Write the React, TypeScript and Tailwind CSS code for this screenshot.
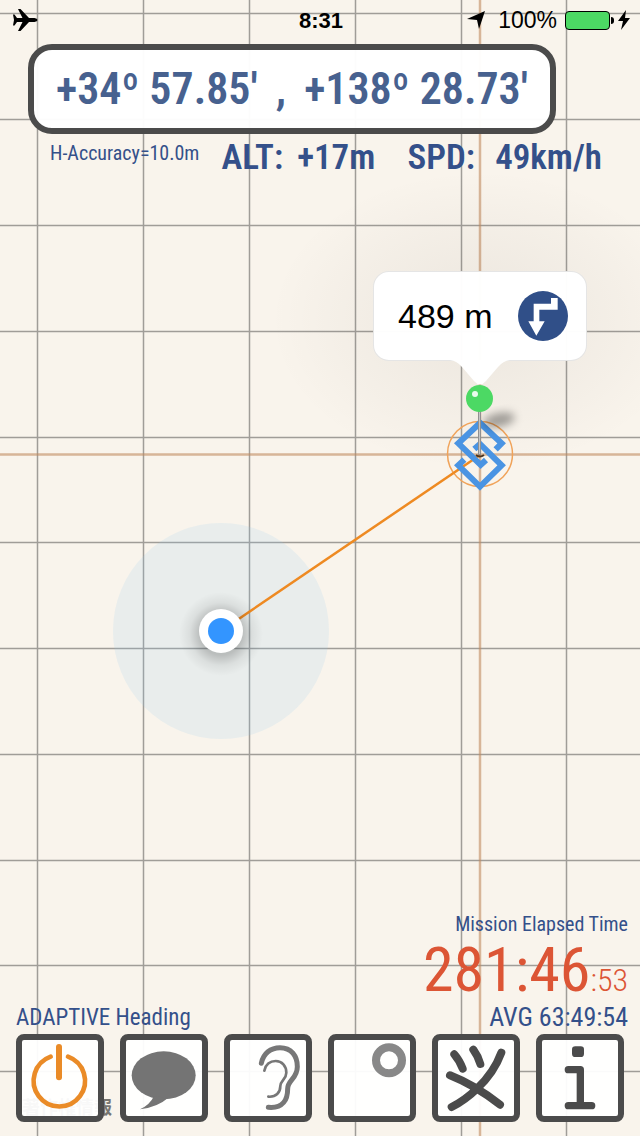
import { ReactNode } from 'react';

const columns = [37, 143, 249, 355, 461, 566];
const rows = [13, 119, 225, 331, 437, 542, 648, 754, 860, 965, 1071];

const MapCanvas = () => (
  <svg className="absolute inset-0 h-full w-full" viewBox="0 0 640 1136" preserveAspectRatio="xMidYMid slice" aria-hidden="true">
    <defs>
      <radialGradient id="calloutShade">
        <stop offset="0.2" stopColor="#201008" stopOpacity="0.05" />
        <stop offset="0.7" stopColor="#201008" stopOpacity="0.02" />
        <stop offset="1" stopColor="#201008" stopOpacity="0" />
      </radialGradient>
      <radialGradient id="dotShade">
        <stop offset="0.5" stopColor="#000" stopOpacity="0.2" />
        <stop offset="0.75" stopColor="#000" stopOpacity="0.06" />
        <stop offset="1" stopColor="#000" stopOpacity="0" />
      </radialGradient>
      <filter id="soft" x="-50%" y="-50%" width="200%" height="200%">
        <feGaussianBlur stdDeviation="4" />
      </filter>
    </defs>

    <g stroke="#a09d98" strokeWidth="1.5">
      {columns.map((x) => (
        <line key={x} x1={x + 0.5} y1="0" x2={x + 0.5} y2="1136" />
      ))}
      {rows.map((y) => (
        <line key={y} x1="0" y1={y + 0.5} x2="640" y2={y + 0.5} />
      ))}
    </g>
    <path d="M480 0V1136M0 454.500H640" stroke="#c08a60" strokeOpacity="0.6" strokeWidth="2.500" />

    <circle cx="221" cy="631" r="108" fill="#8cc8f0" fillOpacity="0.15" />
    <ellipse cx="480" cy="320" rx="210" ry="150" fill="url(#calloutShade)" />

    <circle cx="480" cy="454" r="32.500" fill="none" stroke="#f0a35a" strokeWidth="1.5" />
    <line x1="221" y1="631" x2="480" y2="455" stroke="#ee8a22" strokeWidth="2.500" />

    <circle cx="221" cy="634" r="42" fill="url(#dotShade)" />
    <circle cx="221" cy="631" r="22" fill="#fff" />
    <circle cx="221" cy="631" r="13" fill="#3395ff" />

    {/* target marker */}
    <g transform="translate(360 260) scale(0.3333)" fill="none" stroke="#4a94e3" strokeWidth="18">
      <path d="M407 568L425 550L360 489L295 550L362 615L378 600" />
      <path d="M343 567L360 552L425 616L360 680L295 616L313 599" />
    </g>

    {/* pin */}
    <ellipse cx="499" cy="420" rx="16" ry="7" fill="#000" fillOpacity="0.35" transform="rotate(-12 499 420)" filter="url(#soft)" />
    <path d="M476 455q4 3 8 0" fill="none" stroke="#4a3420" strokeWidth="2" />
    <line x1="479.500" y1="408" x2="479.500" y2="455" stroke="#909090" strokeWidth="3" />
    <line x1="479.500" y1="410" x2="479.500" y2="454" stroke="#c6c6c6" strokeWidth="1" />
    <circle cx="479.500" cy="398.500" r="13.500" fill="#4cd964" />
    <circle cx="475" cy="394" r="3" fill="#e9fbec" />
  </svg>
);

const StatusBar = () => (
  <header className="grid h-10 grid-cols-3 items-center pl-3 pr-2.5 font-['Liberation_Sans',Arial,sans-serif] text-black">
    <svg className="h-6 w-[26px]" viewBox="0 0 26 24" aria-label="Airplane mode">
      <path d="M1 6.500H2.500L5 10H10.500L6 1H8.500L17 10H22.500Q25.500 10.500 25.500 12Q25.500 13.500 22.500 14H17L8.500 23H6L10.500 14H5L2.500 17.500H1L2 12Z" />
    </svg>
    <p className="text-center text-[22px] font-bold">8:31</p>
    <div className="flex items-center justify-end gap-2">
      <svg className="mr-1 h-5 w-5" viewBox="0 0 20 20" aria-label="Location">
        <path d="M19 1L13 19L11 10L1 9Z" />
      </svg>
      <p className="text-[23px]">100%</p>
      <div className="flex items-center gap-px">
        <div className="h-[19px] w-[45px] rounded border border-black bg-[#4cd964]" />
        <div className="h-[7px] w-[3px] rounded-r-full bg-black" />
      </div>
      <svg className="-ml-1 h-5 w-3" viewBox="0 0 12 20" aria-label="Charging">
        <path d="M8 0L0 11H5L3 20L12 8H7Z" />
      </svg>
    </div>
  </header>
);

const Callout = () => (
  <div className="absolute left-3/4 top-[271px] w-[214px] -translate-x-1/2">
    <div className="flex h-[90px] items-center justify-between rounded-2xl border border-black/10 bg-white/98 pl-6 pr-[18px]">
      <p className="font-['Liberation_Sans',Arial,sans-serif] text-[34px] text-black">489 m</p>
      <button type="button" aria-label="Navigate" className="h-[50px] w-[50px] rounded-full bg-[#304f88]">
        <svg viewBox="0 0 150 150" fill="#fff">
          <path d="M99 21H119V56H64V91H80L55 134L31 91H47V38H99Z" />
        </svg>
      </button>
    </div>
    <svg className="mx-auto -mt-px h-[25px] w-[60px]" viewBox="0 0 60 25" fill="#fff" aria-hidden="true">
      <path d="M0 0Q7 1 12 7L24 21Q30 28 36 21L48 7Q53 1 60 0Z" />
    </svg>
  </div>
);

interface ToolButtonProps {
  label: string;
  children: ReactNode;
}

const ToolButton = ({ label, children }: ToolButtonProps) => (
  <button type="button" aria-label={label} className="aspect-square rounded-lg border-6 border-[#4b4b4b] bg-white/95">
    <svg className="h-full w-full" viewBox="0 0 228 228" fill="none" strokeLinecap="round">
      {children}
    </svg>
  </button>
);

const Toolbar = () => (
  <nav className="grid grid-cols-6 gap-4 px-4">
    <ToolButton label="Power">
      <g stroke="#ea8b27">
        <path d="M138 50A77 77 0 1 1 86 50" strokeWidth="14" />
        <path d="M111 21V112" strokeWidth="18" />
      </g>
    </ToolButton>
    <ToolButton label="Message">
      <g fill="#747474">
        <ellipse cx="113" cy="106" rx="96" ry="72" />
        <path d="M84 168Q72 194 42 208Q94 202 126 174Z" />
      </g>
    </ToolButton>
    <ToolButton label="Listen">
      <g stroke="#777">
        <path d="M94 70C100 40 122 23 150 23C184 23 202 48 202 80C202 116 173 120 173 146C173 178 160 206 115 202" strokeWidth="15" />
        <path d="M103 92C106 74 120 63 137 63C156 63 169 78 169 98C169 118 151 122 151 138C151 158 138 172 115 170" strokeWidth="8" />
      </g>
    </ToolButton>
    <ToolButton label="Record">
      <circle cx="165" cy="61" r="39" stroke="#888" strokeWidth="24" />
    </ToolButton>
    <ToolButton label="Tools">
      <g stroke="#4b4b4b" strokeWidth="24">
        <path d="M49 43Q64 60 74 86M106 29Q120 48 127 72" />
        <path d="M190 38Q168 98 118 145Q82 180 41 201M36 106Q112 136 186 194" />
      </g>
    </ToolButton>
    <ToolButton label="Information">
      <rect x="90" y="19" width="36" height="32" rx="10" fill="#4b4b4b" />
      <path d="M79 89H115V197M79 197H149" stroke="#4b4b4b" strokeWidth="22" strokeLinejoin="round" />
    </ToolButton>
  </nav>
);

const App = () => {
  return (
    <div className="relative flex min-h-screen flex-col justify-between overflow-hidden bg-[#f9f4ec] pb-3.5 font-['Roboto_Condensed','Liberation_Sans_Narrow',Roboto,sans-serif] text-[#34508a]">
      <MapCanvas />
      <a href="#legal" className="absolute bottom-4 left-[22px] font-['Noto_Sans_CJK_JP',sans-serif] text-lg font-bold text-[#777571]">
        著作権情報
      </a>
      <Callout />

      <div className="relative">
        <StatusBar />
        <div className="ml-7 mr-[84px] mt-1 flex h-[90px] items-center justify-between rounded-3xl border-6 border-[#4b4b4b] bg-white/97 px-[22px] text-[44px] font-semibold text-[#47618f]">
          <span>+34º 57.85'</span>
          <span>,</span>
          <span>+138º 28.73'</span>
        </div>
        <div className="ml-[50px] mr-[38px] mt-1 flex items-start">
          <p className="mr-[22px] text-[20px] leading-[30px]">H-Accuracy=10.0m</p>
          <p className="flex gap-3.5 text-[35px] font-semibold leading-10">
            <span>ALT:</span>
            <span>+17m</span>
          </p>
          <p className="ml-auto flex gap-5 text-[35px] font-semibold leading-10">
            <span>SPD:</span>
            <span>49km/h</span>
          </p>
        </div>
      </div>

      <div className="relative">
        <div className="flex items-end justify-between pl-4 pr-3">
          <p className="text-[23px] leading-8">ADAPTIVE Heading</p>
          <div className="text-right">
            <p className="text-[20px] leading-8">Mission Elapsed Time</p>
            <p className="text-[62px] leading-[60px] text-[#dc5535]">
              281:46<span className="text-[32px] font-light leading-none">:53</span>
            </p>
            <p className="text-[26px] leading-[34px]">AVG 63:49:54</p>
          </div>
        </div>
        <Toolbar />
      </div>
    </div>
  );
};

export default App;
